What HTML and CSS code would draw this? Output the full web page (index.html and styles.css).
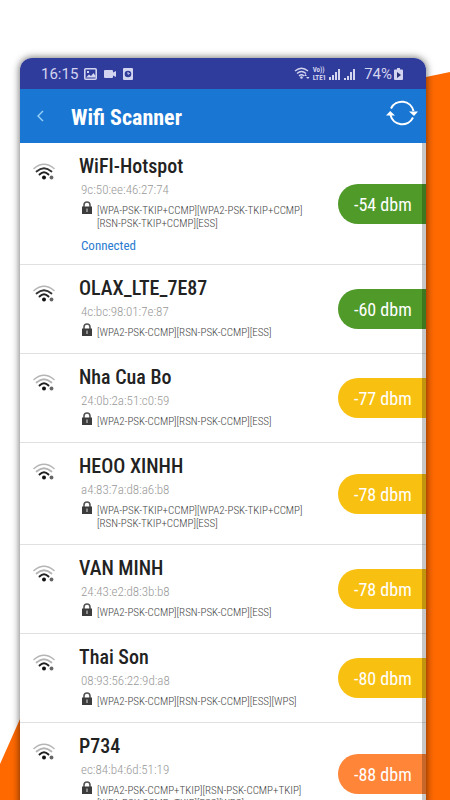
FILE: index.html
```html
<!DOCTYPE html>
<html lang="en">
<head>
<meta charset="utf-8">
<meta name="viewport" content="width=device-width, initial-scale=1">
<title>Wifi Scanner</title>
<link rel="stylesheet" href="styles.css">
</head>
<body>
<svg class="defs" aria-hidden="true">
  <defs>
    <symbol id="lock" viewBox="0 0 12 14">
      <path d="M3 6V4a3 3 0 0 1 6 0v2" fill="none" stroke="#555" stroke-width="1.6"/>
      <rect x="1" y="5.500" width="10" height="7.500" fill="#3c3c3c"/>
      <path d="M6 7.500v3.500" stroke="#aaa" stroke-width="1.500"/>
    </symbol>
    <symbol id="wifi" viewBox="0 0 22 17">
      <g fill="none" stroke-linecap="round">
        <path class="arc-outer" d="M1 5.500Q11-3 21 5.500" stroke-width="1.500"/>
        <path class="arc-middle" d="M3.500 8.500Q11 2 18.500 8.500" stroke-width="1.800"/>
        <path class="arc-inner" d="M6.500 11.500Q11 7 15.500 11.500" stroke-width="1.900"/>
      </g>
      <circle cx="11" cy="14.500" r="2" fill="#111"/>
      <circle cx="18.500" cy="14.500" r="1.900" fill="#666"/>
    </symbol>
  </defs>
</svg>
<div class="page">
  <main class="phone">
    <div class="status">
      <span class="status-text">16:15</span>
      <svg class="glyph-image" viewBox="0 0 13 12"><rect x=".8" y=".8" width="11.400" height="10.400" rx="1" fill="none" stroke="currentColor" stroke-width="1.600"/><path d="M2 9.500l3-3 2 1.500 2.500-3 2 3v1.500zM3 3h2v2H3z" fill="currentColor"/></svg>
      <svg class="glyph-video" viewBox="0 0 12 8"><path d="M1 0h7a1 1 0 0 1 1 1v1.500L12 1v6L9 5.500V7a1 1 0 0 1-1 1H1a1 1 0 0 1-1-1V1a1 1 0 0 1 1-1z" fill="currentColor"/></svg>
      <svg class="glyph-clock" viewBox="0 0 10 12"><rect width="10" height="12" rx="1" fill="currentColor"/><circle cx="5" cy="6" r="3.300" fill="#303c9c"/><path d="M5 4v2.300l1.800-1" fill="none" stroke="currentColor"/></svg>
      <span class="spacer"></span>
      <svg class="glyph-wifi" viewBox="0 0 16 13"><g fill="none" stroke="currentColor" stroke-width="1.300"><path d="M1 4Q7.500-1.500 14 4"/><path d="M3 6.500Q7.500 2.500 12 6.500"/><path d="M5 9Q7.500 6.500 10 9"/></g><circle cx="7.500" cy="10.500" r="1.300" fill="currentColor"/><path d="M10 9l1.500-2L13 9zm2 1h3.500L14 12z" fill="currentColor"/></svg>
      <span class="volte"><span>Vo))</span><span>LTE1</span></span>
      <svg class="glyph-bars" viewBox="0 0 12 12"><path d="M1 12V9m3 3V7m3 5V4m3 8V1" stroke="currentColor" stroke-width="2"/></svg>
      <svg class="glyph-bars" viewBox="0 0 12 12"><path d="M1 12v-2m3 2V8m3 4V4m3 8V1" stroke="currentColor" stroke-width="2"/></svg>
      <span class="status-text percent">74%</span>
      <svg class="glyph-battery" viewBox="0 0 9 12"><path d="M3 0h3v1.500h2a1 1 0 0 1 1 1V11a1 1 0 0 1-1 1H1a1 1 0 0 1-1-1V2.500a1 1 0 0 1 1-1h2z" fill="currentColor"/><path d="M3 4l4 3-4 3z" fill="#283275"/></svg>
    </div>
    <header class="bar">
      <button class="back" type="button" aria-label="Back"><svg viewBox="0 0 8 12"><path d="M7 1L2 6l5 5" fill="none" stroke="#9bd2fa" stroke-width="1.400"/></svg></button>
      <h1>Wifi Scanner</h1>
      <button class="refresh" type="button" aria-label="Refresh"><svg viewBox="0 0 32 28"><g fill="none" stroke="#fff" stroke-width="2"><path d="M5 9.500A12 12 0 0 1 27.500 12"/><path d="M27 18.500A12 12 0 0 1 4.500 16"/></g><path d="M23 12.500h9L28 17zM0 16.500L4.200 12 9 16.500z" fill="#fff"/></svg></button>
    </header>
    <ul class="list">
      <li class="row">
        <svg class="wifi full"><use href="#wifi"/></svg>
        <div class="info"><h2>WiFI-Hotspot</h2><p class="mac">9c:50:ee:46:27:74</p><p class="security"><svg><use href="#lock"/></svg><span>[WPA-PSK-TKIP+CCMP][WPA2-PSK-TKIP+CCMP]<br>[RSN-PSK-TKIP+CCMP][ESS]</span></p><p class="connected">Connected</p></div>
        <span class="level good">-54 dbm</span>
      </li>
      <li class="row">
        <svg class="wifi full"><use href="#wifi"/></svg>
        <div class="info"><h2>OLAX_LTE_7E87</h2><p class="mac">4c:bc:98:01:7e:87</p><p class="security"><svg><use href="#lock"/></svg><span>[WPA2-PSK-CCMP][RSN-PSK-CCMP][ESS]</span></p></div>
        <span class="level good">-60 dbm</span>
      </li>
      <li class="row">
        <svg class="wifi"><use href="#wifi"/></svg>
        <div class="info"><h2>Nha Cua Bo</h2><p class="mac">24:0b:2a:51:c0:59</p><p class="security"><svg><use href="#lock"/></svg><span>[WPA2-PSK-CCMP][RSN-PSK-CCMP][ESS]</span></p></div>
        <span class="level fair">-77 dbm</span>
      </li>
      <li class="row">
        <svg class="wifi"><use href="#wifi"/></svg>
        <div class="info"><h2>HEOO XINHH</h2><p class="mac">a4:83:7a:d8:a6:b8</p><p class="security"><svg><use href="#lock"/></svg><span>[WPA-PSK-TKIP+CCMP][WPA2-PSK-TKIP+CCMP]<br>[RSN-PSK-TKIP+CCMP][ESS]</span></p></div>
        <span class="level fair">-78 dbm</span>
      </li>
      <li class="row">
        <svg class="wifi"><use href="#wifi"/></svg>
        <div class="info"><h2>VAN MINH</h2><p class="mac">24:43:e2:d8:3b:b8</p><p class="security"><svg><use href="#lock"/></svg><span>[WPA2-PSK-CCMP][RSN-PSK-CCMP][ESS]</span></p></div>
        <span class="level fair">-78 dbm</span>
      </li>
      <li class="row">
        <svg class="wifi"><use href="#wifi"/></svg>
        <div class="info"><h2>Thai Son</h2><p class="mac">08:93:56:22:9d:a8</p><p class="security"><svg><use href="#lock"/></svg><span>[WPA2-PSK-CCMP][RSN-PSK-CCMP][ESS][WPS]</span></p></div>
        <span class="level fair">-80 dbm</span>
      </li>
      <li class="row">
        <svg class="wifi"><use href="#wifi"/></svg>
        <div class="info"><h2>P734</h2><p class="mac">ec:84:b4:6d:51:19</p><p class="security"><svg><use href="#lock"/></svg><span>[WPA2-PSK-CCMP+TKIP][RSN-PSK-CCMP+TKIP]<br>[WPA-PSK-CCMP+TKIP][ESS][WPS]</span></p></div>
        <span class="level weak">-88 dbm</span>
      </li>
    </ul>
  </main>
</div>
</body>
</html>
```
FILE: styles.css
```css
* { box-sizing: border-box; }
body, h1, h2, p, ul { margin: 0; padding: 0; }
body {
  font-family: "Roboto Condensed", "Liberation Sans Narrow", Roboto, sans-serif;
  background: #fff;
}
svg { display: block; flex: none; }
.defs { position: absolute; width: 0; height: 0; }
.page {
  position: relative;
  height: 100vh;
  overflow: hidden;
  padding: 58px 24px 0 20px;
}
.page::before {
  content: "";
  position: absolute;
  inset: 0;
  background: #ff6900;
  clip-path: polygon(0 764px, 20px 719px, 50% 719px, 50% 140px, calc(100% - 24px) 77px, 100% 72px, 100% 100%, 0 100%);
}
.phone {
  position: relative;
  background: #fff;
  border-radius: 12px 12px 0 0;
  overflow: hidden;
  box-shadow: 0 0 7px 1px rgba(0, 0, 0, .5);
}
.phone::after {
  content: "";
  position: absolute;
  inset: 85px 0 0 auto;
  width: 4px;
  background: rgba(0, 0, 0, .22);
}
.status {
  display: flex;
  align-items: center;
  height: 31px;
  padding: 0 23px 0 21px;
  background: #303c9c;
  color: #d3d5f0;
}
.status-text { font: 15px/20px Roboto, sans-serif; }
.spacer { flex: 1; }
.glyph-image { width: 13px; height: 12px; margin-left: 6px; }
.glyph-video { width: 12px; height: 8px; margin-left: 7px; }
.glyph-clock { width: 10px; height: 12px; margin-left: 7px; }
.glyph-wifi { width: 16px; height: 13px; margin-right: 3px; }
.volte { display: grid; font-size: 7px; font-weight: 700; line-height: 8px; }
.glyph-bars { width: 12px; height: 12px; margin-left: 3px; }
.percent { margin-left: 8px; }
.glyph-battery { width: 9px; height: 12px; margin-left: 2px; }
.bar {
  display: flex;
  align-items: center;
  height: 54px;
  padding: 0 8px 0 12px;
  background: #1976d2;
  color: #fff;
}
.bar button { border: 0; padding: 0; background: none; }
.back { width: 16px; }
.back svg { width: 8px; height: 12px; margin: auto; }
.bar h1 { flex: 1; margin-left: 23px; padding-top: 4px; font-size: 22px; line-height: 28px; }
.refresh { margin-bottom: 6px; }
.refresh svg { width: 32px; height: 28px; }
.list { list-style: none; }
.row {
  display: flex;
  align-items: center;
  padding: 10px 0 8px 13px;
  border-bottom: 1px solid #e0e0e0;
}
.wifi { width: 22px; height: 17px; margin-top: 10px; align-self: flex-start; }
.arc-outer { stroke: #b5b5b5; }
.arc-middle { stroke: var(--middle, #b5b5b5); }
.arc-inner { stroke: #222; }
.full { --middle: #333; }
.info { flex: 1; margin-left: 24px; }
.info h2 { font-size: 20px; font-weight: 500; line-height: 27px; color: #222; }
.mac { padding-left: 2px; font-size: 13px; font-weight: 300; line-height: 20px; color: #999; }
.security {
  display: flex;
  gap: 4px;
  margin: 4px 0 6px;
  padding-left: 2px;
  font-size: 11px;
  font-weight: 300;
  line-height: 13px;
  color: #444;
  white-space: nowrap;
}
.security svg { width: 12px; height: 14px; margin: -3px 0 0; }
.connected { padding-left: 2px; font-size: 13px; line-height: 20px; color: #2b7bd0; }
.level {
  flex: none;
  width: 88px;
  height: 40px;
  margin-bottom: 2px;
  padding-left: 16px;
  border-radius: 20px 0 0 20px;
  font-size: 18px;
  line-height: 42px;
  color: #fff;
}
.good { background: #4f9a29; }
.fair { background: #f8c112; }
.weak { background: #ff8538; }
```
